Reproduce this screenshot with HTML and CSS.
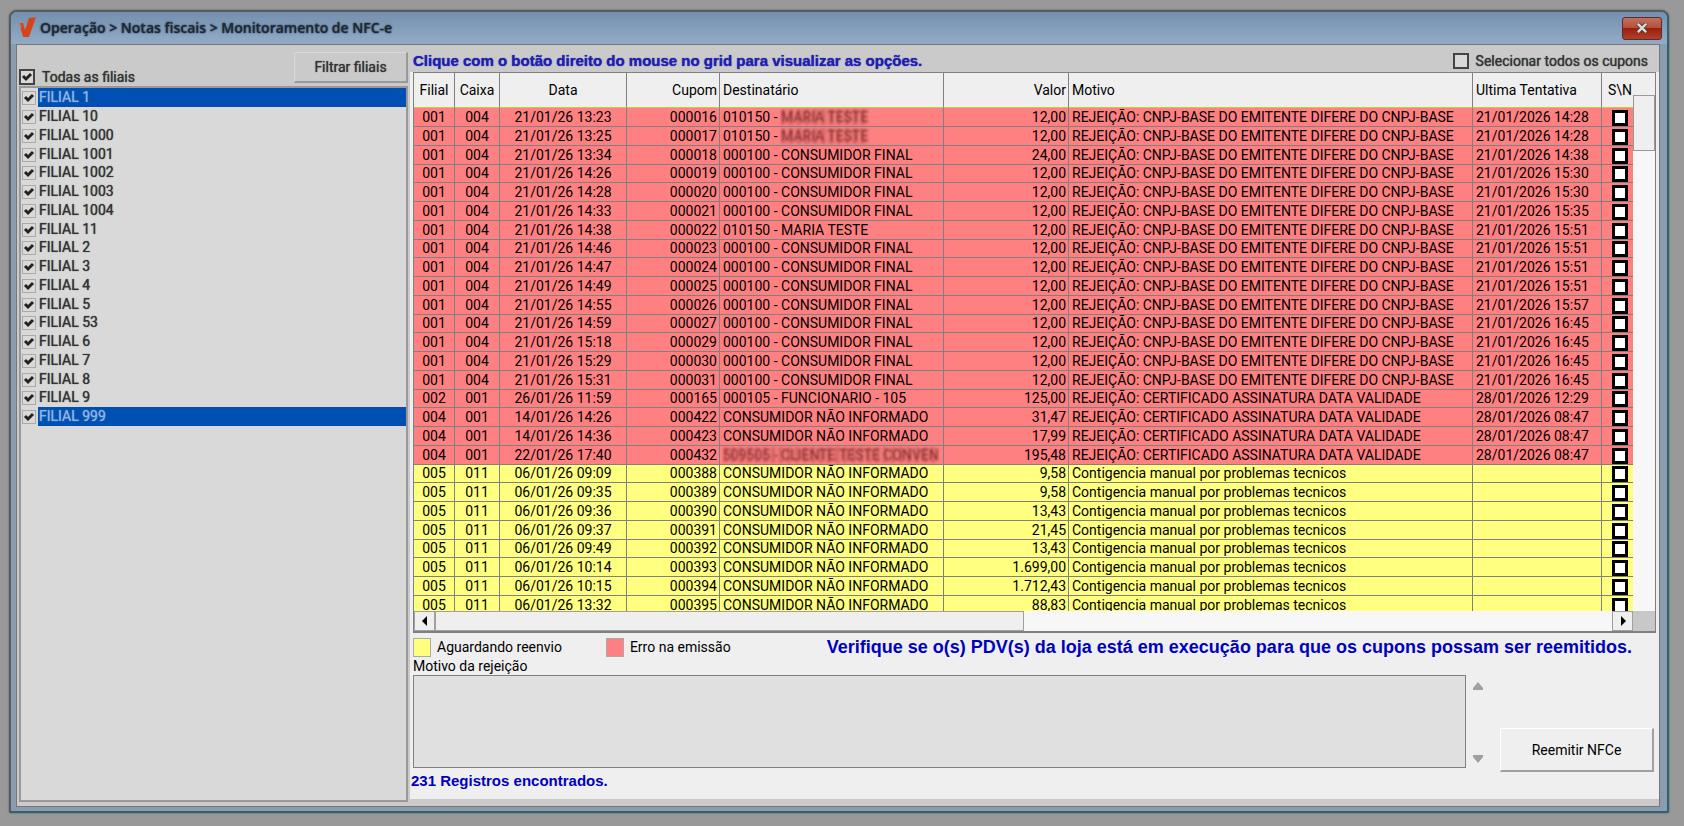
FILE: index.html
```
<!DOCTYPE html>
<html lang="pt-BR">
	<head>
		<meta charset="UTF-8">
		<title>Monitoramento de NFC-e</title>
		<link rel="stylesheet" href="styles.css">
	</head>
	<body>
		<div class="window">
			<div class="titlebar">
				<svg class="logo" viewBox="0 0 20 22"><path d="M3 6 L7 6 L9 13 L13 1 L20 0 L13 20 L7 20 Z" fill="#d84416"/><path d="M0 6 L4 6 L6 12 Z" fill="#a78a8c"/></svg>
				<h1>Operação &gt; Notas fiscais &gt; Monitoramento de NFC-e</h1>
				<button type="button" class="close" aria-label="Fechar"><svg viewBox="0 0 14 12"><path d="M2 1 L12 11 M12 1 L2 11" stroke="#4a3030" stroke-width="5"/><path d="M2 1 L12 11 M12 1 L2 11" stroke="#d8d8d8" stroke-width="3"/></svg></button>
			</div>
			<div class="content">
				<div class="sidebar">
					<div class="sideTop">
						<label><input type="checkbox" id="todas" checked>Todas as filiais</label>
						<button type="button">Filtrar filiais</button>
					</div>
					<ul id="filiais"></ul>
				</div>
				<div class="main">
					<div class="topline">
						<p>Clique com o botão direito do mouse no grid para visualizar as opções.</p>
						<label><input type="checkbox">Selecionar todos os cupons</label>
					</div>
					<div class="grid">
						<div class="gridBody">
							<table>
								<colgroup><col class="cFilial"><col class="cCaixa"><col class="cData"><col class="cCupom"><col class="cDest"><col class="cValor"><col class="cMotivo"><col class="cUltima"><col class="cSn"></colgroup>
								<thead>
									<tr><th>Filial</th><th>Caixa</th><th>Data</th><th class="num">Cupom</th><th class="txt">Destinatário</th><th class="num">Valor</th><th class="txt">Motivo</th><th class="txt">Ultima Tentativa</th><th>S\N</th></tr>
								</thead>
								<tbody id="cupons"></tbody>
							</table>
						</div>
						<div class="vbar"><span></span><i></i></div>
						<div class="hbar">
							<button type="button" aria-label="Rolar para a esquerda"><svg viewBox="0 0 6 10"><path d="M5 0 V10 L0 5 Z"/></svg></button>
							<span></span>
							<button type="button" aria-label="Rolar para a direita"><svg viewBox="0 0 6 10"><path d="M1 0 V10 L6 5 Z"/></svg></button>
						</div>
						<div class="corner"></div>
					</div>
					<div class="legend">
						<span class="item"><i class="box wait"></i>Aguardando reenvio</span>
						<span class="item"><i class="box error"></i>Erro na emissão</span>
						<p>Verifique se o(s) PDV(s) da loja está em execução para que os cupons possam ser reemitidos.</p>
					</div>
					<label class="memoLabel" for="motivo">Motivo da rejeição</label>
					<div class="bottom">
						<textarea id="motivo" readonly></textarea>
						<div class="spin">
							<svg viewBox="0 0 10 8"><path d="M5 0 L10 6 V8 H0 V6 Z"/></svg>
							<svg viewBox="0 0 10 8"><path d="M5 8 L10 2 V0 H0 V2 Z"/></svg>
						</div>
						<button type="button" class="resend">Reemitir NFCe</button>
					</div>
					<p class="count">231 Registros encontrados.</p>
				</div>
			</div>
		</div>
		<script src="script.js"></script>
	</body>
</html>
```
FILE: styles.css
```
*{
	margin: 0px;
	padding: 0px;
	box-sizing: border-box;
}
body{
	background: #999999;
	padding: 10px 15px 13px 9px;
	height: 100vh;
	font-family: Roboto, sans-serif;
	font-size: 14px;
	line-height: 18px;
	color: #000000;
}
button, textarea{
	font: inherit;
}
.window{
	height: 100%;
	display: flex;
	flex-direction: column;
	padding: 0px 7px 4px 5px;
	border: 2px solid #555c62;
	border-right-color: #2e6472;
	border-bottom-color: #2e6472;
	border-radius: 8px 8px 2px 2px;
	background: #8b9cae;
	box-shadow: 0px 0px 2px #555555;
}
.titlebar{
	display: flex;
	align-items: center;
	height: 32px;
	flex: none;
	margin: 0px -7px 0px -5px;
	padding: 0px 5px;
	border-radius: 6px 6px 0px 0px;
	background: linear-gradient(#7390ae, #93abc6);
}
.logo{
	width: 20px;
	height: 22px;
	margin-right: 4px;
}
.titlebar h1{
	flex: 1;
	font-family: "Open Sans", sans-serif;
	font-size: 14px;
	font-weight: 600;
	color: #1c2834;
	text-shadow: 0px 0px 2px #1c2834;
}
.close{
	width: 40px;
	height: 23px;
	border: 1px solid #5c2c2c;
	border-radius: 3px;
	background: linear-gradient(#c0705c 0%, #b85040 45%, #9c2008 50%, #b0402c 100%);
}
.close svg{
	width: 14px;
	height: 10px;
}
.content{
	flex: 1;
	display: flex;
	min-height: 0px;
	border: 1px solid #777777;
	background: #cacaca;
}
.sidebar{
	flex: none;
	display: flex;
	flex-direction: column;
	width: 391px;
	padding: 7px 0px 4px 2px;
	color: #333333;
}
.sideTop{
	display: flex;
	justify-content: space-between;
	height: 34px;
}
.sideTop label{
	display: flex;
	align-items: center;
	align-self: flex-end;
	gap: 7px;
	height: 18px;
	text-shadow: 0px 0px 1px #333333;
}
.sideTop button{
	width: 114px;
	height: 31px;
	border: 1px solid #d8d8d8;
	border-right: 2px solid #999999;
	border-bottom: 2px solid #999999;
	background: #cacaca;
	color: #333333;
	text-shadow: 0px 0px 1px #333333;
}
input[type=checkbox]{
	appearance: none;
	flex: none;
	width: 16px;
	height: 16px;
	border: 3px solid #000000;
	background: #ffffff;
}
.sidebar input, .topline input{
	border: 2px solid #444444;
	background: #d9d9d9;
}
.sidebar input:checked{
	background: #d9d9d9 url("data:image/svg+xml,%3Csvg xmlns='http://www.w3.org/2000/svg' viewBox='0 0 12 12'%3E%3Cpath d='M2 5 L5 8 L10 3' fill='none' stroke='%23222222' stroke-width='3'/%3E%3C/svg%3E") center / 12px 12px no-repeat;
}
#filiais{
	flex: 1;
	list-style: none;
	border: 2px solid #999999;
	background: #d9d9d9;
}
#filiais label{
	display: grid;
	grid-template-columns: 17px 1fr;
	height: 19px;
}
#filiais li:nth-child(4n) label{
	height: 18px;
}
#filiais input{
	width: 14px;
	height: 14px;
	margin: 3px 0px 0px 1px;
	border: 1px solid #aaaaaa;
}
#filiais span{
	padding-left: 1px;
	text-shadow: 0px 0px 1px #333333;
}
#filiais .sel span{
	background: #0050b3;
	color: #8cb4e0;
	text-shadow: 0px 0px 1px #8cb4e0;
}
.main{
	flex: 1;
	min-width: 0px;
	display: flex;
	flex-direction: column;
	margin: 0px 0px 7px 2px;
	padding: 0px 3px;
	background: linear-gradient(#cacaca 27px, #efefef 27px);
}
.topline{
	display: flex;
	justify-content: space-between;
	align-items: center;
	height: 27px;
	padding: 4px 8px 0px 0px;
}
.topline p{
	font-family: "Liberation Sans", sans-serif;
	font-size: 15px;
	font-weight: bold;
	color: #2020b0;
	text-shadow: 0px 0px 1px #2020b0;
}
.topline label{
	display: flex;
	align-items: center;
	gap: 7px;
	color: #333333;
	text-shadow: 0px 0px 1px #333333;
}
.grid{
	display: grid;
	grid-template-columns: 1fr 22px;
	grid-template-rows: 538px 20px;
	border: 1px solid #808080;
	border-bottom-width: 2px;
	background: #efefef;
}
.gridBody{
	overflow: hidden;
}
table{
	width: 100%;
	table-layout: fixed;
	border-collapse: separate;
	border-spacing: 0px;
}
.cFilial{
	width: 41px;
}
.cCaixa{
	width: 45px;
}
.cData{
	width: 127px;
}
.cCupom{
	width: 93px;
}
.cDest{
	width: 224px;
}
.cValor{
	width: 125px;
}
.cUltima{
	width: 129px;
}
.cSn{
	width: 31px;
}
th{
	height: 35px;
	border-right: 1px solid #808080;
	border-bottom: 1px solid #c8c840;
	background: #efefef;
	font-weight: normal;
	text-align: center;
}
td{
	height: 19px;
	overflow: hidden;
	border-right: 1px solid #808080;
	border-bottom: 1px solid #808080;
	line-height: 18px;
	white-space: nowrap;
	text-align: center;
}
tbody tr:nth-child(4n) td{
	height: 18px;
	line-height: 17px;
}
th:last-child, td:last-child{
	padding-left: 5px;
	border-right: none;
}
.txt{
	text-align: left;
	padding-left: 3px;
}
.num{
	text-align: right;
	padding-right: 2px;
}
td input{
	display: block;
	margin: 1px auto 0px auto;
}
.erro td{
	background: #ff8080;
}
.espera td{
	background: #ffff80;
}
/* nomes ocultos */
.hidden{
	background: repeating-linear-gradient(90deg, #d86868 0px, #d86868 4px, #f07878 4px, #f07878 8px);
	color: #802c2c;
	filter: blur(1px);
}
.vbar{
	background: #f7f7f7;
}
.vbar span{
	display: block;
	height: 22px;
	background: #efefef;
}
.vbar i{
	display: block;
	height: 56px;
	border: 1px solid #999999;
	background: #efefef;
}
.hbar{
	display: flex;
	background: #f7f7f7;
}
.hbar button{
	width: 21px;
	border: 1px solid #a0a0a0;
	background: #efefef;
}
.hbar svg{
	width: 6px;
	height: 10px;
}
.hbar span{
	width: 589px;
	margin-right: auto;
	border: 1px solid #a0a0a0;
	background: #efefef;
}
.corner{
	background: #c8c8c8;
}
.legend{
	display: flex;
	align-items: center;
	height: 24px;
	padding: 4px 24px 0px 0px;
}
.item{
	display: flex;
	align-items: center;
	gap: 6px;
	margin-right: 44px;
}
.box{
	width: 18px;
	height: 19px;
	border: 1px solid #aaaaaa;
}
.wait{
	background: #ffff80;
}
.error{
	background: #ff8080;
}
.legend p{
	margin-left: auto;
	font-family: "Liberation Sans", sans-serif;
	font-size: 18px;
	font-weight: bold;
	color: #0000c0;
}
.bottom{
	display: flex;
	height: 97px;
}
.bottom textarea{
	flex: 1;
	height: 93px;
	border: 1px solid #808080;
	background: #e0e0e0;
	resize: none;
}
.spin{
	display: flex;
	flex-direction: column;
	justify-content: space-between;
	margin: 7px 17px 9px 7px;
}
.spin svg{
	width: 10px;
	height: 8px;
	fill: #a0a0a0;
}
.resend{
	align-self: flex-end;
	width: 154px;
	height: 44px;
	margin-right: 2px;
	border: 1px solid #ffffff;
	border-right: 2px solid #a0a0a0;
	border-bottom: 2px solid #a0a0a0;
	background: #efefef;
}
.memoLabel{
	align-self: flex-start;
}
.count{
	margin-left: -2px;
	font-family: "Liberation Sans", sans-serif;
	font-size: 15px;
	line-height: 18px;
	font-weight: bold;
	color: #0000c0;
}
```
FILE: script.js
```
var filiais = ['1','10','1000','1001','1002','1003','1004','11','2','3','4','5','53','6','7','8','9','999'];
var html = '';
for (var i = 0; i < filiais.length; i++) {
	var sel = (filiais[i] == '1' || filiais[i] == '999') ? ' class="sel"' : '';
	html += '<li' + sel + '><label><input type="checkbox" checked><span>FILIAL ' + filiais[i] + '</span></label></li>';
}
document.getElementById('filiais').innerHTML = html;

var BASE = 'REJEIÇÃO: CNPJ-BASE DO EMITENTE DIFERE DO CNPJ-BASE';
var CERT = 'REJEIÇÃO: CERTIFICADO ASSINATURA DATA VALIDADE';
var CONT = 'Contigencia manual por problemas tecnicos';
var FINAL = '000100 - CONSUMIDOR FINAL';
var NAO = 'CONSUMIDOR NÃO INFORMADO';
var MARIA = '010150 - <span class="hidden">MARIA TESTE</span>';

//filial, caixa, data, cupom, destinatario, valor, motivo, ultima tentativa
var cupons = [
	['001','004','21/01/26 13:23','000016',MARIA,'12,00',BASE,'21/01/2026 14:28'],
	['001','004','21/01/26 13:25','000017',MARIA,'12,00',BASE,'21/01/2026 14:28'],
	['001','004','21/01/26 13:34','000018',FINAL,'24,00',BASE,'21/01/2026 14:38'],
	['001','004','21/01/26 14:26','000019',FINAL,'12,00',BASE,'21/01/2026 15:30'],
	['001','004','21/01/26 14:28','000020',FINAL,'12,00',BASE,'21/01/2026 15:30'],
	['001','004','21/01/26 14:33','000021',FINAL,'12,00',BASE,'21/01/2026 15:35'],
	['001','004','21/01/26 14:38','000022','010150 - MARIA TESTE','12,00',BASE,'21/01/2026 15:51'],
	['001','004','21/01/26 14:46','000023',FINAL,'12,00',BASE,'21/01/2026 15:51'],
	['001','004','21/01/26 14:47','000024',FINAL,'12,00',BASE,'21/01/2026 15:51'],
	['001','004','21/01/26 14:49','000025',FINAL,'12,00',BASE,'21/01/2026 15:51'],
	['001','004','21/01/26 14:55','000026',FINAL,'12,00',BASE,'21/01/2026 15:57'],
	['001','004','21/01/26 14:59','000027',FINAL,'12,00',BASE,'21/01/2026 16:45'],
	['001','004','21/01/26 15:18','000029',FINAL,'12,00',BASE,'21/01/2026 16:45'],
	['001','004','21/01/26 15:29','000030',FINAL,'12,00',BASE,'21/01/2026 16:45'],
	['001','004','21/01/26 15:31','000031',FINAL,'12,00',BASE,'21/01/2026 16:45'],
	['002','001','26/01/26 11:59','000165','000105 - FUNCIONARIO - 105','125,00',CERT,'28/01/2026 12:29'],
	['004','001','14/01/26 14:26','000422',NAO,'31,47',CERT,'28/01/2026 08:47'],
	['004','001','14/01/26 14:36','000423',NAO,'17,99',CERT,'28/01/2026 08:47'],
	['004','001','22/01/26 17:40','000432','<span class="hidden">509505 - CLIENTE TESTE CONVEN</span>','195,48',CERT,'28/01/2026 08:47'],
	['005','011','06/01/26 09:09','000388',NAO,'9,58',CONT,''],
	['005','011','06/01/26 09:35','000389',NAO,'9,58',CONT,''],
	['005','011','06/01/26 09:36','000390',NAO,'13,43',CONT,''],
	['005','011','06/01/26 09:37','000391',NAO,'21,45',CONT,''],
	['005','011','06/01/26 09:49','000392',NAO,'13,43',CONT,''],
	['005','011','06/01/26 10:14','000393',NAO,'1.699,00',CONT,''],
	['005','011','06/01/26 10:15','000394',NAO,'1.712,43',CONT,''],
	['005','011','06/01/26 13:32','000395',NAO,'88,83',CONT,'']
];
var cls = ['','','','num','txt','num','txt','txt'];
html = '';
for (var i = 0; i < cupons.length; i++) {
	html += '<tr class="' + (cupons[i][6] == CONT ? 'espera' : 'erro') + '">';
	for (var j = 0; j < 8; j++) {
		html += '<td class="' + cls[j] + '">' + cupons[i][j] + '</td>';
	}
	html += '<td><input type="checkbox" aria-label="Cupom ' + cupons[i][3] + '"></td></tr>';
}
document.getElementById('cupons').innerHTML = html;
```
